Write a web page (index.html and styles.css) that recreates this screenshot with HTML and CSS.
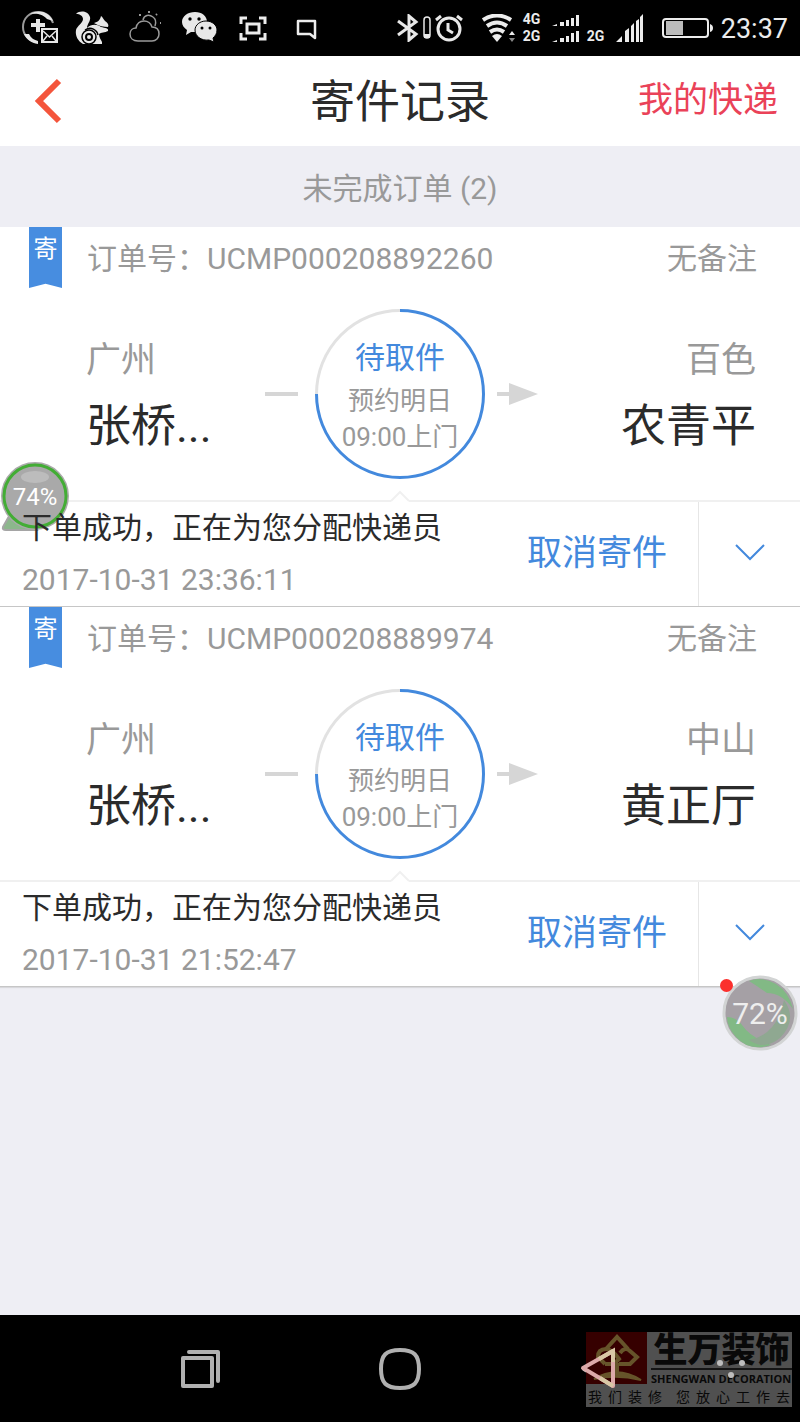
FILE: index.html
```html
<!DOCTYPE html>
<html lang="zh-CN">
<head>
<meta charset="utf-8">
<meta name="viewport" content="width=device-width, initial-scale=1">
<title>寄件记录</title>
<link rel="stylesheet" href="styles.css">
</head>
<body>
<div class="status">
  <div class="status-apps">
    <svg width="36" height="36" viewBox="0 0 36 36" fill="none" stroke="#e6e6e6">
      <path d="M15 32C7 31 1 25 1 17C1 8 8 2 16 2C23 2 29 6 31 13" stroke="#999" stroke-width="2"/>
      <path d="M8 4C17 -1 27 2 31 11L25 9C21 4 15 3 8 4ZM2 24L7 24C9 28 12 30 16 31L16 34C9 33 4 29 2 24Z" fill="#e6e6e6" stroke="none"/>
      <path d="M16 9V22M9 15H23" stroke-width="4"/>
      <path d="M20 19H35V32H20Z" stroke-width="2"/><path d="M21 21L27.500 27L34 21M21 31L25 26M34 31L30 26" stroke-width="1.500"/>
    </svg>
    <svg width="36" height="36" viewBox="0 0 36 36" fill="#e8e8e8">
      <path d="M1 4C5 0 13 1 15 7C16 11 12 14 12 18C16 14 22 14 26 17C30 18 34 18 33 21C30 23 26 22 24 24C24 27 26 30 27 32V34H8C3 31 0 26 1 20C2 16 8 13 8 9C8 6 5 4 1 4Z"/>
      <path d="M19 13C23 12 25 10 26 6C28 7 28 9 30 11C33 13 34 15 33 17C29 17 24 16 19 13Z"/>
      <path d="M10 20C16 16 22 20 23 25" fill="none" stroke="#000" stroke-width="1.500"/>
      <circle cx="14" cy="27" r="7" stroke="#000" stroke-width="1.500"/><circle cx="14" cy="27" r="3" fill="none" stroke="#000" stroke-width="2"/>
    </svg>
    <svg width="36" height="36" viewBox="0 0 36 36" fill="none" stroke="#9a9a9a" stroke-width="1.500">
      <path d="M10 31C5 31 2 28 2 24C2 20 5 18 8 18C9 13 12 11 16 11C21 11 23 14 24 17C29 17 31 20 31 24C31 28 28 31 24 31Z"/>
      <path d="M15 10C16 5 21 4 25 7C28 9 28 13 27 16"/>
      <path d="M12 4V6M21 1V3M29 4L28 5M32 13H33" stroke-width="2"/>
    </svg>
    <svg width="36" height="36" viewBox="0 0 36 36" fill="#e8e8e8">
      <path d="M14 2C21 2 26 6 26 12C26 18 21 22 14 22L10 22L5 25L6 20C3 18 1 15 1 12C1 6 7 2 14 2Z"/>
      <path d="M25 11C31 11 36 15 36 20C36 24 34 26 32 28L33 32L28 30C20 31 14 26 14 20C14 15 19 11 25 11Z" stroke="#000"/>
      <g fill="#000"><circle cx="9" cy="9" r="1.700"/><circle cx="18" cy="9" r="1.700"/><circle cx="21" cy="18" r="1.500"/><circle cx="29" cy="18" r="1.500"/></g>
    </svg>
    <svg width="36" height="36" viewBox="0 0 36 36" fill="none" stroke="#ececec" stroke-width="3">
      <path d="M7 14V8H13M25 8H31V14M31 23V29H25M13 29H7V23"/><path d="M13 14H25V23H13Z"/>
    </svg>
    <svg width="36" height="36" viewBox="0 0 36 36" fill="none" stroke="#ececec" stroke-width="2.500">
      <path d="M11 11H28V28L23 24H11Z" stroke-linejoin="round"/>
    </svg>
  </div>
  <div class="status-system">
    <div class="status-set status-tight">
      <svg width="22" height="28" viewBox="0 0 22 28" fill="none" stroke="#e8e8e8" stroke-width="3"><path d="M1 7L19 20L12 26V2L19 8L1 21"/></svg>
      <svg width="8" height="24" viewBox="0 0 8 24"><rect x="1" y="1" width="6" height="21" rx="3" fill="none" stroke="#e8e8e8" stroke-width="1.500"/><path d="M1 18H7V22H1Z" fill="#e8e8e8"/></svg>
      <svg width="28" height="28" viewBox="0 0 28 28" fill="none" stroke="#e8e8e8" stroke-width="3"><circle cx="14" cy="15" r="11"/><path d="M13 9V16L18 19M1 6L6 2M22 2L27 6"/></svg>
    </div>
    <div class="status-set">
      <svg width="33" height="28" viewBox="0 0 33 28" fill="none" stroke="#ececec" stroke-width="4"><path d="M1 6Q15 -3 29 6M5 12Q15 5 25 12M8 18Q15 13 22 18"/><path d="M10 22Q15 18 20 22L15 28Z" fill="#ececec" stroke="none"/><path d="M27 21L30 17L33 21Z" fill="#ececec" stroke="none"/><path d="M27 24H33L30 28Z" fill="#888" stroke="none"/></svg>
      <div class="network"><span>4G</span><span>2G</span></div>
      <svg width="27" height="28" viewBox="0 0 27 28" fill="#ececec"><path d="M0 12L5 10V12ZM8 8H12V12H8ZM14 6H17V12H14ZM19 4H22V12H19ZM24 1H27V12H24ZM0 28L5 26V28ZM8 24H12V28H8ZM14 22H17V28H14ZM19 19H22V28H19ZM24 17H27V28H24Z"/></svg>
      <div class="network network-low"><span>2G</span></div>
      <svg width="27" height="28" viewBox="0 0 27 28" fill="#ececec"><path d="M0 28L6 22V28ZM9 17L13 14V28H9ZM15 12L18 9V28H15ZM20 7L23 5V28H20ZM24 3L27 0V28H24Z"/></svg>
    </div>
    <div class="status-set">
      <svg width="51" height="22" viewBox="0 0 51 22"><rect x="1" y="2" width="45" height="18" rx="3" fill="none" stroke="#ececec" stroke-width="2"/><path d="M4 4H21V18H4Z" fill="#bbb"/><path d="M48 7Q51 8 51 11Q51 14 48 15Z" fill="#ececec"/></svg>
      <time class="clock">23:37</time>
    </div>
  </div>
</div>

<header class="topbar">
  <button class="back" type="button" aria-label="返回"><svg width="28" height="46" viewBox="0 0 28 46" fill="none" stroke="#f4553c" stroke-width="6"><path d="M25 3L5 23L25 43"/></svg></button>
  <h1 class="title">寄件记录</h1>
  <a class="mine" href="#mine">我的快递</a>
</header>

<main class="orders">
  <h2 class="group">未完成订单 (2)</h2>

  <article class="card">
    <div class="card-head">
      <span class="ribbon">寄</span>
      <span class="number">订单号<span class="centered-mark">：</span>UCMP000208892260</span>
      <span class="note">无备注</span>
    </div>
    <div class="route">
      <div class="from">
        <div class="place"><span class="city">广州</span><span class="name">张桥...</span></div>
        <svg width="33" height="22" viewBox="0 0 33 22"><path d="M0 9H33V13H0Z" fill="#d6d6d6"/></svg>
      </div>
      <div class="ring">
        <svg class="ring-line" viewBox="0 0 170 170" fill="none" stroke-width="3"><path d="M1.500 85A83.500 83.500 0 0 1 85 1.500" stroke="#e2e2e2"/><path d="M85 1.500A83.500 83.500 0 1 1 1.500 85" stroke="#4389dd"/></svg>
        <div class="ring-text"><strong class="state">待取件</strong><span class="pickup">预约明日</span><span class="pickup">09:00上门</span></div>
      </div>
      <div class="to">
        <svg width="41" height="22" viewBox="0 0 41 22"><path d="M0 9H12V0L41 11L12 22V13H0Z" fill="#d6d6d6"/></svg>
        <div class="place place-end"><span class="city">百色</span><span class="name">农青平</span></div>
      </div>
    </div>
    <div class="card-foot">
      <svg class="notch" width="20" height="12" viewBox="0 0 20 12"><path d="M1 11L10 2L19 11V12H1Z" fill="#fff"/><path d="M1 11L10 2L19 11" fill="none" stroke="#f0f0f0" stroke-width="2"/></svg>
      <div class="message"><p class="progress">下单成功<span class="centered-mark">，</span>正在为您分配快递员</p><time class="date">2017-10-31 23:36:11</time></div>
      <button class="cancel" type="button">取消寄件</button>
      <button class="expand" type="button" aria-label="展开"><svg width="30" height="17" viewBox="0 0 30 17" fill="none" stroke="#4389dd" stroke-width="2"><path d="M1 1L15 15L29 1"/></svg></button>
    </div>
  </article>

  <article class="card">
    <div class="card-head">
      <span class="ribbon">寄</span>
      <span class="number">订单号<span class="centered-mark">：</span>UCMP000208889974</span>
      <span class="note">无备注</span>
    </div>
    <div class="route">
      <div class="from">
        <div class="place"><span class="city">广州</span><span class="name">张桥...</span></div>
        <svg width="33" height="22" viewBox="0 0 33 22"><path d="M0 9H33V13H0Z" fill="#d6d6d6"/></svg>
      </div>
      <div class="ring">
        <svg class="ring-line" viewBox="0 0 170 170" fill="none" stroke-width="3"><path d="M1.500 85A83.500 83.500 0 0 1 85 1.500" stroke="#e2e2e2"/><path d="M85 1.500A83.500 83.500 0 1 1 1.500 85" stroke="#4389dd"/></svg>
        <div class="ring-text"><strong class="state">待取件</strong><span class="pickup">预约明日</span><span class="pickup">09:00上门</span></div>
      </div>
      <div class="to">
        <svg width="41" height="22" viewBox="0 0 41 22"><path d="M0 9H12V0L41 11L12 22V13H0Z" fill="#d6d6d6"/></svg>
        <div class="place place-end"><span class="city">中山</span><span class="name">黄正厅</span></div>
      </div>
    </div>
    <div class="card-foot">
      <svg class="notch" width="20" height="12" viewBox="0 0 20 12"><path d="M1 11L10 2L19 11V12H1Z" fill="#fff"/><path d="M1 11L10 2L19 11" fill="none" stroke="#f0f0f0" stroke-width="2"/></svg>
      <div class="message"><p class="progress">下单成功<span class="centered-mark">，</span>正在为您分配快递员</p><time class="date">2017-10-31 21:52:47</time></div>
      <button class="cancel" type="button">取消寄件</button>
      <button class="expand" type="button" aria-label="展开"><svg width="30" height="17" viewBox="0 0 30 17" fill="none" stroke="#4389dd" stroke-width="2"><path d="M1 1L15 15L29 1"/></svg></button>
    </div>
  </article>
</main>

<nav class="keys">
  <button class="key" type="button" aria-label="最近任务"><svg width="40" height="40" viewBox="0 0 40 40" fill="none" stroke="#b0b0b0" stroke-width="4" stroke-linecap="round" stroke-linejoin="round"><path d="M3 9H32V37H3ZM9 3H38V32"/></svg></button>
  <button class="key" type="button" aria-label="主页"><svg width="42" height="42" viewBox="0 0 42 42" fill="none" stroke="#b0b0b0" stroke-width="4"><path d="M21 2C35 2 40 7 40 21C40 35 35 40 21 40C7 40 2 35 2 21C2 7 7 2 21 2Z"/></svg></button>
  <button class="key" type="button" aria-label="返回键"><svg width="40" height="42" viewBox="0 0 40 42" fill="none" stroke="#c9c9c9" stroke-width="4" stroke-linejoin="round"><path d="M4 21L35 3V39Z"/></svg></button>
</nav>

<div class="watermark">
  <div class="mark-top">
    <svg class="mark-logo" width="61" height="52" viewBox="0 0 61 52"><path d="M0 0H61V52H0Z" fill="#360000"/><g fill="none" stroke="#66542a" stroke-width="4"><path d="M20 17L31 5L42 17"/><path d="M19 32L12 25Q12 17 20 17Q26 17 33 27L28 32H19M34 21Q39 14 44 19L51 25L44 32H33"/><path d="M31 31V43"/></g><path d="M8 47Q31 33 55 48Q31 42 8 47Z" fill="#66542a" stroke="#66542a" stroke-width="2"/></svg>
    <div class="mark-name"><span class="mark-cn">生万装饰</span><span class="mark-en">SHENGWAN DECORATION</span></div>
  </div>
  <div class="mark-line"><span>我</span><span>们</span><span>装</span><span>修</span><span class="mark-second">您</span><span>放</span><span>心</span><span>工</span><span>作</span><span>去</span></div>
  <svg class="mark-keys" width="206" height="76" viewBox="0 0 206 76"><path d="M-3 36L27 19V54Z" fill="none" stroke="#dca9a9" stroke-width="4" stroke-linejoin="round"/><path d="M13 27L27 19V30M14 46L27 54" fill="none" stroke="#d8c7a5" stroke-width="4"/><g fill="#bdbdbd"><circle cx="134" cy="31" r="3"/><circle cx="156" cy="31" r="3"/><circle cx="145" cy="43" r="3"/></g></svg>
</div>

<div class="bubble bubble-left">
  <svg width="70" height="72" viewBox="0 0 70 72"><path d="M12 50L3 66Q2 69 6 69H36Z" fill="#8cb78c" stroke="#a5a5a5" stroke-width="2"/><circle cx="35" cy="35" r="32" fill="#a9a9a9" stroke="#aaa" stroke-width="4"/><circle cx="35" cy="35" r="31" fill="none" stroke="#43ad35" stroke-width="3"/><ellipse cx="35" cy="16" rx="14" ry="6" fill="#bcbcbc"/></svg>
  <span class="bubble-text">74%</span>
</div>
<div class="bubble bubble-right">
  <svg width="76" height="76" viewBox="0 0 76 76"><circle cx="38" cy="38" r="36" fill="#a5a0a5" stroke="#d2d4d4" stroke-width="3"/><path d="M27 6Q40 1 54 9Q67 17 71 34Q60 18 45 18Q35 11 27 6ZM5 42Q14 42 20 50Q28 62 49 70Q27 77 14 62Q5 52 5 42Z" fill="#82b985"/><path d="M62 25Q76 45 58 63Q42 76 27 65Q55 60 62 25Z" fill="#8fa891"/></svg>
  <span class="bubble-text bubble-big">72%</span>
  <i class="dot"></i>
</div>
</body>
</html>
```
FILE: styles.css
```css
* { box-sizing: border-box; }

body {
  position: relative;
  display: flex;
  flex-direction: column;
  min-height: 100vh;
  margin: 0;
  background: #eeeef4;
  color: #2b2b2b;
  font-family: Roboto, "Noto Sans CJK SC", sans-serif;
  font-size: 30px;
}

h1, h2, p { margin: 0; font-weight: 400; }
button { padding: 0; border: 0; background: none; color: inherit; font: inherit; }
svg { display: block; flex: none; }

.status {
  display: flex;
  align-items: center;
  justify-content: space-between;
  height: 56px;
  padding: 0 12px 0 22px;
  background: #000;
  color: #ececec;
}
.status-apps { display: flex; gap: 17px; }
.status-system { display: flex; align-items: center; gap: 19px; }
.status-set { display: flex; align-items: center; gap: 8px; }
.status-tight { gap: 4px; }
.network {
  display: flex;
  flex-direction: column;
  width: 21px;
  font-size: 14px;
  font-weight: 700;
  line-height: 17px;
}
.network-low { padding-top: 16px; }
.clock { font-size: 27px; line-height: 32px; padding-top: 2px; }

.topbar {
  display: grid;
  grid-template-columns: 1fr auto 1fr;
  align-items: center;
  height: 90px;
  padding: 0 22px 0 34px;
  background: #fff;
}
.back { justify-self: start; }
.title { margin-right: 12px; padding-top: 4px; font-size: 45px; line-height: 60px; }
.mine {
  justify-self: end;
  color: #ea4258;
  font-size: 35px;
  line-height: 40px;
  text-decoration: none;
}

.orders { flex: 1; }
.group {
  padding-top: 4px;
  color: #999;
  font-size: 30px;
  line-height: 77px;
  text-align: center;
}

.card { border-bottom: 1px solid #c6c6c6; background: #fff; }
.card + .card { box-shadow: 0 1px 1px #d8d8dc; }
.card-head {
  display: flex;
  gap: 25px;
  height: 61px;
  padding: 0 43px 0 29px;
  color: #999;
  line-height: 63px;
}
.ribbon {
  width: 33px;
  background: #478de0;
  clip-path: polygon(0 0, 100% 0, 100% 100%, 50% 93%, 0 100%);
  color: #fff;
  font-size: 24px;
  line-height: 44px;
  text-align: center;
}
.number { flex: 1; }
.centered-mark { font-family: Roboto, "Noto Sans CJK TC", sans-serif; }

.route {
  display: grid;
  grid-template-columns: 1fr 170px 1fr;
  align-items: center;
  padding: 21px 0;
}
.from, .to {
  display: flex;
  align-items: center;
  justify-content: space-between;
}
.from { padding: 0 17px 0 86px; }
.to { padding: 0 44px 0 12px; }
.place { display: flex; flex-direction: column; line-height: 66px; }
.place-end { align-items: flex-end; }
.city { color: #999; font-size: 35px; }
.name { font-size: 45px; }
.ring { display: grid; }
.ring-line, .ring-text { grid-area: 1 / 1; }
.ring-text {
  display: flex;
  flex-direction: column;
  align-items: center;
  padding-top: 24px;
  line-height: 36px;
}
.state {
  color: #4389dd;
  font-weight: 400;
  line-height: 50px;
}
.pickup { color: #999; font-size: 26px; }

.card-foot {
  position: relative;
  display: flex;
  padding-left: 22px;
  border-top: 2px solid #f0f0f0;
}
.notch { position: absolute; top: -12px; left: 50%; margin-left: -10px; }
.message { position: relative; z-index: 1; flex: 1; line-height: 52px; }
.date { display: block; color: #999; }
.cancel { padding: 0 31px; color: #4389dd; font-size: 35px; line-height: 40px; }
.expand {
  display: flex;
  align-items: center;
  justify-content: center;
  width: 102px;
  padding-bottom: 4px;
  border-left: 1px solid #e6e6e6;
}

.keys {
  display: flex;
  justify-content: space-around;
  align-items: center;
  height: 107px;
  padding: 0 100px;
  background: #000;
}

.watermark {
  position: absolute;
  right: 8px;
  bottom: 15px;
  width: 206px;
  background: #505050;
  color: #090909;
}
.mark-top { display: flex; gap: 4px; }
.mark-name { display: flex; flex: 1; flex-direction: column; min-width: 0; }
.mark-cn {
  border-bottom: 2px solid #151515;
  font-size: 34px;
  font-weight: 900;
  line-height: 36px;
  text-align: center;
}
.mark-en {
  font-family: "Open Sans", sans-serif;
  font-size: 11px;
  font-weight: 700;
  line-height: 17px;
  white-space: nowrap;
}
.mark-line {
  display: flex;
  justify-content: space-between;
  padding: 0 2px;
  font-size: 14px;
  line-height: 20px;
}
.mark-second { margin-left: 8px; }
.mark-keys { position: absolute; top: 0; left: 0; overflow: visible; }

.bubble { position: absolute; display: grid; place-items: center; color: #fff; }
.bubble > svg, .bubble-text { grid-area: 1 / 1; }
.bubble-left { top: 461px; left: 0; z-index: 0; }
.bubble-right { top: 975px; right: 2px; }
.bubble-text { font-size: 24px; }
.bubble-big { color: #eee; font-size: 30px; }
.dot {
  position: absolute;
  top: 4px;
  left: -2px;
  width: 13px;
  height: 13px;
  border-radius: 50%;
  background: #fb302d;
}
```
